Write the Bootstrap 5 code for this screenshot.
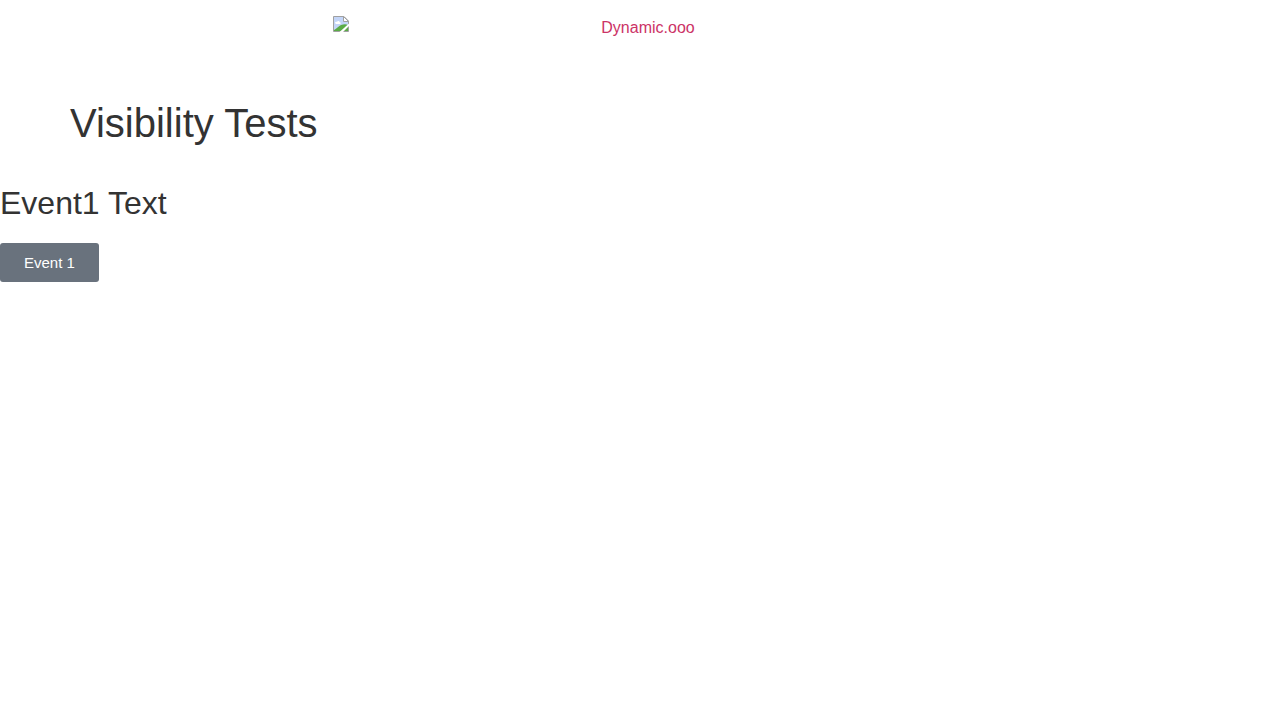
<!DOCTYPE html>
<html lang="en">
<head>
<meta charset="utf-8">
<meta name="viewport" content="width=device-width, initial-scale=1">
<title>Visibility Tests</title>
<link href="https://cdn.jsdelivr.net/npm/bootstrap@5.3.0/dist/css/bootstrap.min.css" rel="stylesheet">
<style>
body { font-family: "Liberation Sans", Arial, sans-serif; color: #333; background: #fff; }
.page-wrap { max-width: 1140px; padding-top: 11px; }
.site-logo { width: 54%; max-width: 614px; color: #cc3366; line-height: 24px; }
.site-logo:hover { color: #336; }
.logo-icon { width: 16px; height: 16px; }
.page-title { font-size: 40px; line-height: 48px; font-weight: 400; }
.event-title { font-size: 32px; line-height: 32px; font-weight: 400; }
.btn-event { --bs-btn-color: #fff; --bs-btn-bg: #69727d; --bs-btn-hover-color: #fff; --bs-btn-hover-bg: #5a636d; --bs-btn-border-width: 0; --bs-btn-border-radius: 3px; --bs-btn-padding-x: 24px; --bs-btn-padding-y: 12px; --bs-btn-font-size: 15px; --bs-btn-line-height: 15px; }
</style>
</head>
<body>
<header class="d-flex justify-content-center pt-3 pb-5">
  <a href="#" class="site-logo d-flex align-items-start text-decoration-none">
    <svg class="logo-icon flex-shrink-0" viewBox="0 0 16 16" aria-hidden="true">
      <path d="M.5.5H11L15.500 5v10.500H.5z" fill="#c3d5f8" stroke="#a0a0a0"/>
      <path d="M2 7c0-1 1-1.500 2-1.300.7-1.200 2.500-1 2.700.5C8 6 8 8 7 8H3z" fill="#fff"/>
      <path d="M1 15v-1C3 13 6 10 8 9c3-1 5-1 7 0v6z" fill="#5aab46"/>
      <path d="M16 7.500V10l-6 6H6.500z" fill="#fff"/>
      <path d="M10.500 .5V5.500h5z" fill="#fff" stroke="#a0a0a0"/>
    </svg>
    <span class="flex-grow-1 text-center">Dynamic.ooo</span>
  </a>
</header>
<main>
  <div class="page-wrap mx-auto pb-3 mb-4"><h1 class="page-title mb-0">Visibility Tests</h1></div>
  <h2 class="event-title mb-4">Event1 Text</h2>
  <button type="button" class="btn btn-event">Event 1</button>
</main>
<script src="https://cdn.jsdelivr.net/npm/bootstrap@5.3.0/dist/js/bootstrap.bundle.min.js"></script>
</body>
</html>
